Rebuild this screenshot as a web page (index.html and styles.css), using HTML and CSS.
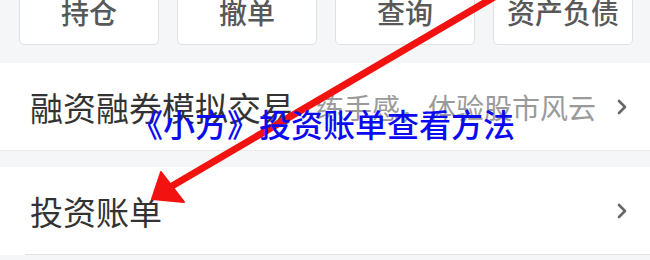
FILE: index.html
```html
<!DOCTYPE html>
<html lang="zh">
<head>
<meta charset="utf-8">
<link rel="stylesheet" href="styles.css">
</head>
<body>
<div class="page">
  <div class="tabs">
    <div class="tab">持仓</div>
    <div class="tab">撤单</div>
    <div class="tab">查询</div>
    <div class="tab">资产负债</div>
  </div>
  <div class="group">
    <div class="row">
      <span class="title">融资融券模拟交易</span>
      <span class="sub">练手感，体验股市风云</span>
      <svg class="chev" width="12" height="16" viewBox="0 0 12 16"><polyline points="3,2 9,8 3,14" fill="none" stroke="#666" stroke-width="2.6" stroke-linecap="round" stroke-linejoin="round"/></svg>
    </div>
  </div>
  <div class="group">
    <div class="row last">
      <span class="title">投资账单</span>
      <svg class="chev" width="12" height="16" viewBox="0 0 12 16"><polyline points="3,2 9,8 3,14" fill="none" stroke="#666" stroke-width="2.6" stroke-linecap="round" stroke-linejoin="round"/></svg>
    </div>
  </div>
  <svg class="arrow" width="650" height="260" viewBox="0 0 650 260">
    <line x1="496" y1="-4" x2="172" y2="186" stroke="#f2120f" stroke-width="7" stroke-linecap="round"/>
    <polygon points="152,199 161,172 184,202" fill="#f2120f" stroke="#f2120f" stroke-width="2" stroke-linejoin="round"/>
  </svg>
  <div class="caption">《小方》投资账单查看方法</div>
</div>
</body>
</html>
```
FILE: styles.css
```css
html, body {
  margin: 0;
  padding: 0;
}
body {
  width: 650px;
  height: 260px;
  overflow: hidden;
  background: #f5f6f8;
  font-family: "Noto Sans CJK SC", "Noto Sans", sans-serif;
}
.page {
  position: relative;
  width: 650px;
  height: 260px;
}
.tabs {
  display: flex;
  gap: 18px;
  padding: 0 16px 0 19px;
  height: 63px;
}
.tab {
  width: 140px;
  height: 65px;
  margin-top: -20px;
  box-sizing: border-box;
  background: #fff;
  border: 1px solid #dfe1e4;
  border-radius: 5px;
  display: flex;
  align-items: flex-end;
  justify-content: center;
  padding-bottom: 17px;
  font-size: 28px;
  line-height: 30px;
  font-weight: 500;
  color: #585858;
}
.group {
  background: #fff;
  margin-bottom: 16px;
}
.row {
  height: 88px;
  box-sizing: border-box;
  display: flex;
  align-items: center;
  padding: 0 22px 0 30px;
  border-bottom: 1px solid #ebebeb;
}
.row.last {
  margin-left: 25px;
  padding-left: 5px;
  border-bottom-color: #e2e2e2;
}
.title {
  font-size: 33px;
  color: #333;
  line-height: 40px;
}
.sub {
  font-size: 28px;
  color: #9a9a9a;
  margin-left: 22px;
  line-height: 40px;
}
.chev {
  margin-left: auto;
}
.arrow {
  position: absolute;
  left: 0;
  top: 0;
}
.caption {
  position: absolute;
  left: 0;
  right: 0;
  top: 102px;
  text-align: center;
  font-size: 32px;
  font-weight: 500;
  line-height: 42px;
  color: #0b0bf2;
  padding-right: 4px;
}
```
